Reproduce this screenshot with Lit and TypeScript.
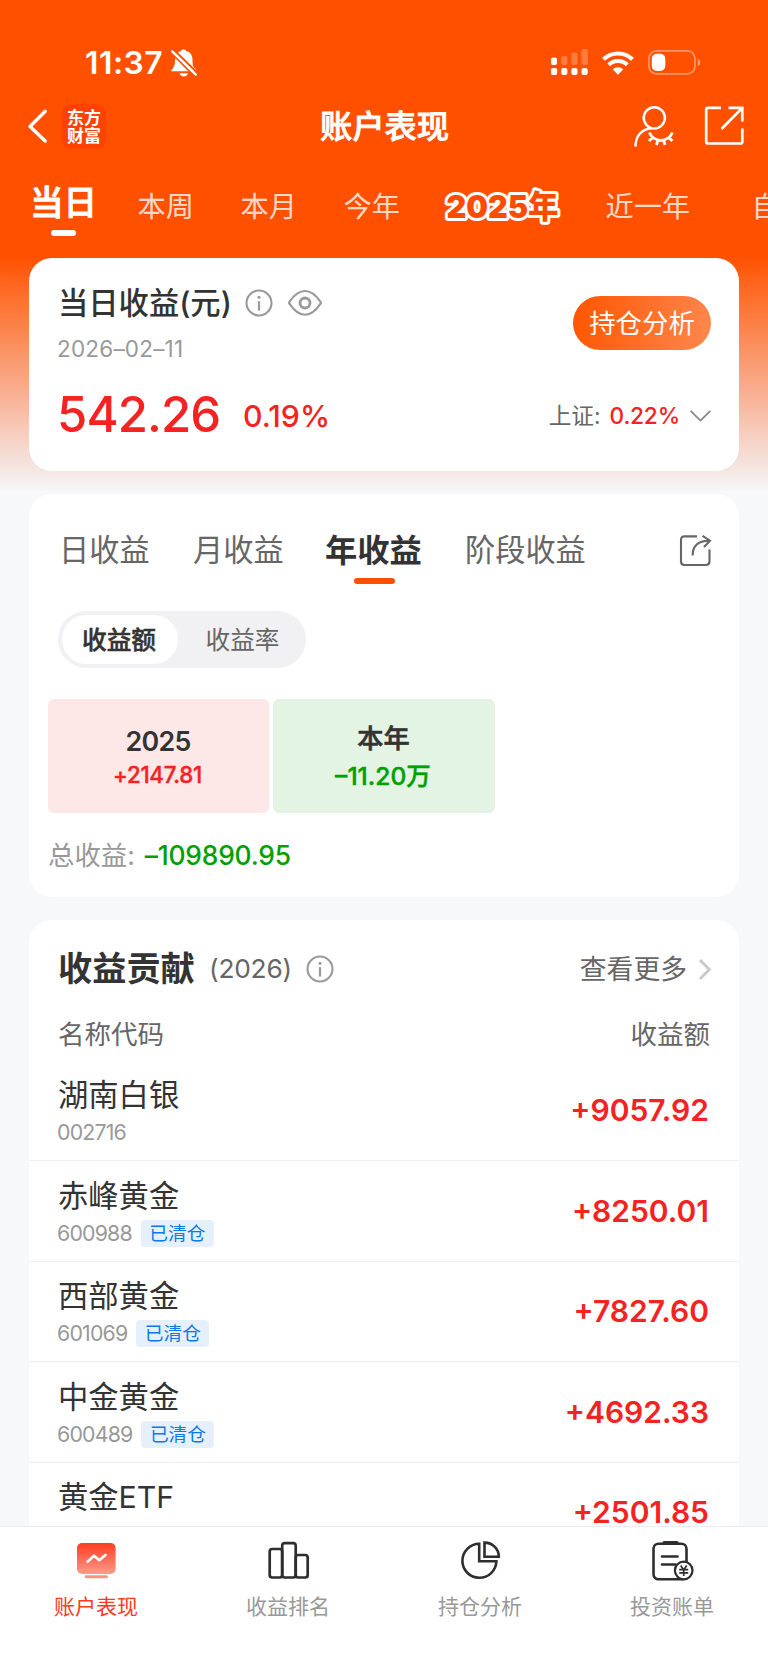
import { LitElement, html, css, svg } from "lit";
import { customElement } from "lit/decorators.js";

const periods = ["本周", "本月", "今年"];

const holdings = [
  { name: "湖南白银", code: "002716", cleared: false, value: "+9057.92" },
  { name: "赤峰黄金", code: "600988", cleared: true, value: "+8250.01" },
  { name: "西部黄金", code: "601069", cleared: true, value: "+7827.60" },
  { name: "中金黄金", code: "600489", cleared: true, value: "+4692.33" },
  { name: "黄金ETF", code: "", cleared: false, value: "+2501.85" },
];

const base = css`
  * { box-sizing: border-box; }
  svg { display: block; flex: none; overflow: visible; }
  span, h1, h2 { white-space: nowrap; margin: 0; }
`;

const infoIcon = html`<svg width="28" height="28" viewBox="0 0 28 28" fill="none" stroke="#999">
  <circle cx="14" cy="14" r="12.5" stroke-width="2.1" />
  <path d="M14 12.2V21.6" stroke-width="2.2" />
  <circle cx="14" cy="8.3" r="1.5" fill="#999" stroke="none" />
</svg>`;

@customElement("status-bar")
class StatusBar extends LitElement {
  static styles = [base, css`
    :host { display: flex; align-items: center; height: 92px; padding: 33px 67px 0 85px; color: #fff; }
    .time { font-size: 31.8px; font-weight: 600; line-height: 36px; letter-spacing: .5px; width: 86px; }
    .bell { margin-top: 1px; }
    .spacer { flex: 1; }
    .cell { margin-right: 14px; }
    .wifi { margin-right: 14px; }
  `];
  render() {
    return html`
      <span class="time">11:37</span>
      <svg class="bell" width="26" height="28" viewBox="0 0 26 28">
        <path d="M3 19.5Q0 20 .3 22.3H25Q25.300 20 22.800 18.300Q21.500 16.500 21.500 11.500Q21.500 3 15.200 2Q14.800 .3 12.500 .3Q10.200 .3 9.800 2Q4.300 3.500 4 11.500Q4 17 1.600 19.500Z" fill="#fff" />
        <path d="M8.500 24.200H17Q16 27.400 12.700 27.400Q9.500 27.400 8.500 24.200Z" fill="#fff" />
        <path d="M-1 2.500L23 26.500M3 1L26 23.500" stroke="#ff5000" stroke-width="2" />
        <path d="M1.200 2.400L24.800 25.600" stroke="#fff" stroke-width="2.300" stroke-linecap="round" />
      </svg>
      <div class="spacer"></div>
      <svg class="cell" width="37" height="27" viewBox="0 0 37 27" fill="#fff">
        <rect x="0" y="8.500" width="6" height="7.500" rx="2" />
        <g opacity=".25">
          <rect x="10.200" y="7" width="6.200" height="9" rx="2" />
          <rect x="20.300" y="3.500" width="6.200" height="12.500" rx="2" />
          <rect x="30.500" y="0" width="6.500" height="16" rx="2" />
        </g>
        ${[0, 10.2, 20.3, 30.5].map((x) => svg`<rect x=${x} y="19" width="6.2" height="7" rx="2" />`)}
      </svg>
      <svg class="wifi" width="32" height="24" viewBox="0 0 32 24" fill="none" stroke="#fff">
        <path d="M1.500 8.300Q7.500 2.400 16 2.400T30.500 8.300" stroke-width="4" />
        <path d="M6.700 13.700Q10.700 9.900 16 9.900T25.300 13.700" stroke-width="4" />
        <path d="M10.800 18.300Q13 16.200 16 16.200T21.200 18.300L16.600 23.300Q16 23.900 15.400 23.300Z" fill="#fff" stroke="none" />
      </svg>
      <svg width="53" height="25" viewBox="0 0 53 25">
        <rect x=".9" y=".9" width="46" height="23" rx="7.500" fill="none" stroke="#fff" stroke-opacity=".4" stroke-width="1.700" />
        <rect x="3.800" y="3.700" width="13.500" height="17.300" rx="5" fill="#fff" />
        <path d="M49.800 8.500Q52.300 10 52.300 12.400T49.800 16.300Z" fill="#fff" fill-opacity=".45" />
      </svg>`;
  }
}

@customElement("nav-bar")
class NavBar extends LitElement {
  static styles = [base, css`
    :host { display: grid; grid-template-columns: 1fr auto 1fr; align-items: center; height: 68px; padding: 0 24px 0 28px; color: #fff; }
    .left { display: flex; align-items: center; gap: 15px; }
    .logo { width: 44px; height: 45px; border-radius: 9px; background: #ff4203; display: flex; flex-direction: column; align-items: center; justify-content: center; font-family: "Noto Sans CJK SC", sans-serif; font-size: 17px; line-height: 18.500px; font-weight: 700; }
    h1 { font-size: 32.300px; font-weight: 500; line-height: 40px; margin: 2px 0 0 -3px; -webkit-text-stroke: .8px currentColor; }
    .right { display: flex; justify-content: flex-end; align-items: center; gap: 30px; }
  `];
  render() {
    return html`
      <div class="left">
        <svg width="19" height="34" viewBox="0 0 19 34" fill="none" stroke="#fff" stroke-width="3.400" stroke-linecap="round" stroke-linejoin="round"><path d="M17.200 2.200L2 17.500L17.200 32" /></svg>
        <div class="logo"><span>东方</span><span>财富</span></div>
      </div>
      <h1>账户表现</h1>
      <div class="right">
        <svg width="40" height="41" viewBox="0 0 40 41" fill="none" stroke="#fff" stroke-width="2.500">
          <circle cx="20.300" cy="11.800" r="10.600" />
          <path d="M1.500 40.500C1.500 30 7.500 23 18 22.300" />
          <path d="M15.300 26.500C17.500 31.500 22 34.300 27 34.300C32 34.300 36.200 31.700 38.400 26.500M18.800 31.300L15 35M24 33.800L22.500 39M29.500 33.800L31 39M34.500 31.300L38.400 35" stroke-width="2.800" />
        </svg>
        <svg width="40" height="40" viewBox="0 0 40 40" fill="none" stroke="#fff" stroke-width="2.700">
          <path d="M17 1.900H4Q2.200 1.900 2.200 3.700V35.700Q2.200 37.500 4 37.500H36.500Q38.300 37.500 38.300 35.700V22.500M24.500 1.900H38.300V15.500M38.300 1.900L17.500 23" />
        </svg>
      </div>`;
  }
}

@customElement("period-tabs")
class PeriodTabs extends LitElement {
  static styles = [base, css`
    :host { display: flex; align-items: flex-start; height: 98px; padding-left: 30px; overflow: hidden; color: rgba(255, 255, 255, .8); }
    .tab { font-size: 28.200px; line-height: 94px; width: 103px; flex: none; }
    .active { width: 107.500px; flex: none; padding-top: 22px; }
    .active .label { display: block; font-size: 33.600px; line-height: 41px; font-weight: 500; color: #fff; -webkit-text-stroke: .9px #fff; }
    .bar { width: 25px; height: 6px; border-radius: 3px; background: #fff; margin: 7px 0 0 21px; }
    .badge { margin-right: 45px; }
    .badge text { font-size: 31.300px; font-weight: 900; fill: #ff4b00; stroke: #fff; stroke-width: 6px; stroke-linejoin: round; paint-order: stroke; }
    .wide { width: 146px; }
  `];
  render() {
    return html`
      <div class="active"><span class="label">当日</span><div class="bar"></div></div>
      ${periods.map((p) => html`<span class="tab">${p}</span>`)}
      <svg class="badge" width="114" height="94" viewBox="0 0 114 94"><text x="-.5" y="58" textLength="112" lengthAdjust="spacingAndGlyphs">2025年</text></svg>
      <span class="tab wide">近一年</span>
      <span class="tab">自</span>`;
  }
}

@customElement("summary-card")
class SummaryCard extends LitElement {
  static styles = [base, css`
    :host { display: flex; justify-content: space-between; height: 213px; margin: 0 29px; padding: 25px 28px 0 29px; background: #fff; border-radius: 23px; }
    .heading { display: flex; align-items: center; height: 40px; }
    h2 { font-size: 30.300px; line-height: 40px; font-weight: 500; color: #333; width: 187px; }
    .eye { margin-left: 15px; }
    .date { display: block; font-size: 22.500px; line-height: 30px; margin: 11px 0 0 -1px; color: #999; letter-spacing: .2px; }
    .amounts { display: flex; align-items: center; height: 60px; margin: 21px 0 0 -1px; color: #f52222; font-weight: 500; }
    .amount { font-size: 49px; line-height: 60px; width: 186px; letter-spacing: -.9px; }
    .rate { font-size: 30.300px; line-height: 36px; margin-top: 2px; }
    .side { display: flex; flex-direction: column; align-items: flex-end; padding-top: 13px; }
    .button { width: 138px; height: 54px; line-height: 54px; border-radius: 27px; text-align: center; font-size: 26.400px; color: #fff; background: linear-gradient(100deg, #ff5500, #ff884e); }
    .index { display: flex; align-items: center; height: 32px; margin-top: 50px; color: #666; font-size: 22.700px; line-height: 32px; }
    .index b { color: #f52222; font-weight: 500; font-size: 22.700px; margin: 0 10px 0 9px; letter-spacing: -.2px; }
  `];
  render() {
    return html`
      <div>
        <div class="heading">
          <h2>当日收益(元)</h2>
          ${infoIcon}
          <svg class="eye" width="34" height="26" viewBox="0 0 34 26" fill="none" stroke="#999">
            <path d="M1.800 14.200Q.4 12.800 1.800 11.400Q9 1 17 1T32.200 11.400Q33.600 12.800 32.200 14.200Q25 24.800 17 24.800T1.800 14.200Z" stroke-width="2.100" />
            <circle cx="17" cy="13" r="5" stroke-width="2.800" />
          </svg>
        </div>
        <span class="date">2026–02–11</span>
        <div class="amounts"><span class="amount">542.26</span><span class="rate">0.19%</span></div>
      </div>
      <div class="side">
        <span class="button">持仓分析</span>
        <div class="index"><span>上证:</span><b>0.22%</b>
          <svg width="21" height="12" viewBox="0 0 21 12" fill="none" stroke="#888" stroke-width="1.800"><path d="M.6 .8L10.500 10.600L20.400 .8" /></svg>
        </div>
      </div>`;
  }
}

@customElement("income-card")
class IncomeCard extends LitElement {
  static styles = [base, css`
    :host { display: block; height: 403px; margin: 23px 29px 0; background: #fff; border-radius: 23px; }
    .tabs { display: flex; padding: 36px 28px 0 30px; height: 117px; color: #666; }
    .tab { font-size: 30.200px; line-height: 41px; width: 134px; }
    .active { width: 138px; }
    .active .label { display: block; font-size: 32.300px; line-height: 42px; font-weight: 700; color: #333; margin-left: -2px; }
    .bar { width: 41px; height: 6.500px; border-radius: 3.200px; background: #ff5000; margin: 5.500px 0 0 26.500px; }
    .share { margin: 5px 0 0 auto; }
    .segment { display: flex; width: 248px; height: 57px; margin-left: 29px; padding: 4px; border-radius: 29px; background: #f1f1f4; font-size: 24.700px; line-height: 50px; color: #666; }
    .on { width: 116px; height: 49px; padding-right: 2px; border-radius: 25px; background: #fff; color: #333; font-weight: 500; text-align: center; -webkit-text-stroke: .5px currentColor; }
    .off { flex: 1; text-align: center; margin-left: 5px; }
    .years { display: grid; grid-template-columns: 221px 222px; gap: 4px; margin: 31px 0 0 19px; }
    .year { display: flex; flex-direction: column; align-items: center; height: 114px; padding-top: 25px; border-radius: 6px; background: #fde7e7; color: #f52222; font-weight: 600; }
    .year .y { font-size: 26.800px; line-height: 34px; color: #333; margin-left: -1px; letter-spacing: -.7px; }
    .year .v { font-size: 22.300px; line-height: 34px; font-weight: 500; letter-spacing: -.3px; margin-left: -2px; -webkit-text-stroke: .4px currentColor; }
    .green { background: #e4f4e4; color: #00a000; padding-top: 23px; }
    .green .y { font-size: 26.200px; font-weight: 500; letter-spacing: 0; -webkit-text-stroke: .6px currentColor; }
    .green .v { font-size: 24.600px; line-height: 40px; letter-spacing: 0; }
    .total { display: flex; margin: 24px 0 0 19px; font-size: 26.400px; line-height: 36px; color: #999; gap: 10px; }
    .total b { font-weight: 500; color: #00a000; letter-spacing: -.2px; }
  `];
  render() {
    return html`
      <div class="tabs">
        <span class="tab">日收益</span><span class="tab">月收益</span>
        <div class="active"><span class="label">年收益</span><div class="bar"></div></div>
        <span class="tab">阶段收益</span>
        <svg class="share" width="31" height="31" viewBox="0 0 31 31" fill="none" stroke="#666" stroke-width="2.100">
          <path d="M17 1.400H4.500Q1 1.400 1 5V26.500Q1 30 4.500 30H26Q29.500 30 29.500 26.500V14.500" />
          <path d="M12.700 20.500Q12.500 6 29 5.800M22.500 .9L30 5.700L24 12" />
        </svg>
      </div>
      <div class="segment"><span class="on">收益额</span><span class="off">收益率</span></div>
      <div class="years">
        <div class="year"><span class="y">2025</span><span class="v">+2147.81</span></div>
        <div class="year green"><span class="y">本年</span><span class="v">–11.20万</span></div>
      </div>
      <div class="total"><span>总收益:</span><b>–109890.95</b></div>`;
  }
}

@customElement("contribution-card")
class ContributionCard extends LitElement {
  static styles = [base, css`
    :host { display: block; flex: none; margin: 23px 29px 0; padding-top: 29px; background: #fff; border-radius: 23px 23px 0 0; color: #666; }
    .head, .cols, .row { display: flex; align-items: center; padding: 0 28px 0 29px; }
    .head { height: 40px; line-height: 40px; }
    h2 { font-size: 34.200px; font-weight: 700; color: #333; width: 151px; }
    .yr { font-size: 26.300px; width: 97px; letter-spacing: -.2px; }
    .more { margin-left: auto; font-size: 26.800px; }
    .arrow { margin-left: 12px; }
    .cols { justify-content: space-between; height: 44px; line-height: 44px; margin-top: 23px; font-size: 26.500px; padding-right: 29px; }
    .row { justify-content: space-between; height: 100.550px; border-bottom: 1.300px solid #eeeff1; padding-right: 30px; }
    .first { height: 105px; padding-top: 4px; }
    .name { display: block; font-size: 30.300px; line-height: 40px; color: #333; padding-top: 1px; }
    .sub { display: flex; align-items: center; height: 27px; margin: 4px 0 0 -1px; gap: 9px; }
    .code { font-size: 21.300px; line-height: 27px; color: #999; letter-spacing: -.8px; }
    .tag { height: 27px; width: 73px; text-align: center; border-radius: 4px; background: #e6f0fb; color: #0a78ee; font-size: 18.700px; line-height: 27px; }
    .value { font-size: 30px; font-weight: 600; color: #f52222; }
  `];
  render() {
    return html`
      <div class="head">
        <h2>收益贡献</h2><span class="yr">(2026)</span>${infoIcon}
        <span class="more">查看更多</span>
        <svg class="arrow" width="12" height="21" viewBox="0 0 12 21" fill="none" stroke="#c8c8c8" stroke-width="2.800"><path d="M1 1L10.400 10.500L1 20" /></svg>
      </div>
      <div class="cols"><span>名称代码</span><span>收益额</span></div>
      ${holdings.map((h, i) => html`
        <div class="row ${i === 0 ? "first" : ""}">
          <div>
            <span class="name">${h.name}</span>
            <div class="sub"><span class="code">${h.code}</span>${h.cleared ? html`<span class="tag">已清仓</span>` : ""}</div>
          </div>
          <span class="value">${h.value}</span>
        </div>`)}`;
  }
}

@customElement("tab-bar")
class TabBar extends LitElement {
  static styles = [base, css`
    :host { display: grid; grid-template-columns: repeat(4, 1fr); height: 144px; flex: none; background: #fff; border-top: 1.300px solid #ececef; color: #999; }
    .item { display: flex; flex-direction: column; align-items: center; padding-top: 13px; font-size: 21px; line-height: 30px; }
    .item svg { margin-bottom: 10px; }
    .on { color: #ff3a1f; }
  `];
  render() {
    return html`
      <div class="item on">
        <svg width="42" height="42" viewBox="0 0 42 42">
          <defs><linearGradient id="g" x1="0" y1="0" x2="0" y2="1"><stop offset="0" stop-color="#ff3b20" /><stop offset="1" stop-color="#ff9a8c" /></linearGradient></defs>
          <rect x="2" y="3" width="38.600" height="31" rx="5" fill="url(#g)" />
          <path d="M12.500 21.700L19 15.700L24.300 20.200L30.500 14.900" fill="none" stroke="#fff" stroke-width="2.600" stroke-linecap="round" stroke-linejoin="round" />
          <rect x="9.800" y="35.300" width="23" height="3" rx="1" fill="#ff9284" />
        </svg><span>账户表现</span>
      </div>
      <div class="item">
        <svg width="42" height="42" viewBox="0 0 42 42" fill="none" stroke="#2e2e2e" stroke-width="2.700">
          <rect x="2.700" y="9" width="12.500" height="28.500" rx="2.500" /><rect x="15.200" y="3.200" width="13.500" height="34.300" rx="2.500" /><rect x="28.700" y="15" width="12" height="22.500" rx="2.500" />
        </svg><span>收益排名</span>
      </div>
      <div class="item">
        <svg width="42" height="42" viewBox="0 0 42 42" fill="none" stroke="#2e2e2e" stroke-width="2.600">
          <path d="M20.200 3.800A17 17 0 1 0 37.400 21.300H20.200Z" /><path d="M25.500 2.600V16.700H39.800A14.200 14.200 0 0 0 25.500 2.600Z" />
        </svg><span>持仓分析</span>
      </div>
      <div class="item">
        <svg width="42" height="42" viewBox="0 0 42 42" fill="none" stroke="#2e2e2e" stroke-width="2.600">
          <rect x="2.500" y="3.800" width="33" height="35.500" rx="5" />
          <path d="M13 2.600H26" stroke-width="3" stroke-linecap="round" />
          <path d="M11 16.500H26.500M11 24.500H24.500" stroke-linecap="round" />
          <circle cx="32.700" cy="30.500" r="8.800" fill="#fff" stroke-width="2.200" />
          <path d="M29.700 25.500L32.700 30L35.700 25.500M32.700 30V36M28.200 29.700H37.200M28.200 32.800H37.200" stroke-width="1.700" />
        </svg><span>投资账单</span>
      </div>`;
  }
}

@customElement("app-root")
class AppRoot extends LitElement {
  static styles = [base, css`
    :host { display: flex; flex-direction: column; width: 768px; height: 1670px; overflow: hidden; font-family: Inter, "Noto Sans CJK SC", sans-serif; background: linear-gradient(180deg, #ff5000 0, #ff5000 256px, #fe6a24 290px, #fc7e42 320px, #fa9466 352px, #f8b093 395px, #f6d0c2 437px, #f5e5e1 468px, #f6f8fa 492px, #f6f8fa 100%); }
    main { flex: 1; min-height: 0; overflow: hidden; }
  `];
  render() {
    return html`
      <main>
        <status-bar></status-bar>
        <nav-bar></nav-bar>
        <period-tabs></period-tabs>
        <summary-card></summary-card>
        <income-card></income-card>
        <contribution-card></contribution-card>
      </main>
      <tab-bar></tab-bar>`;
  }
}
